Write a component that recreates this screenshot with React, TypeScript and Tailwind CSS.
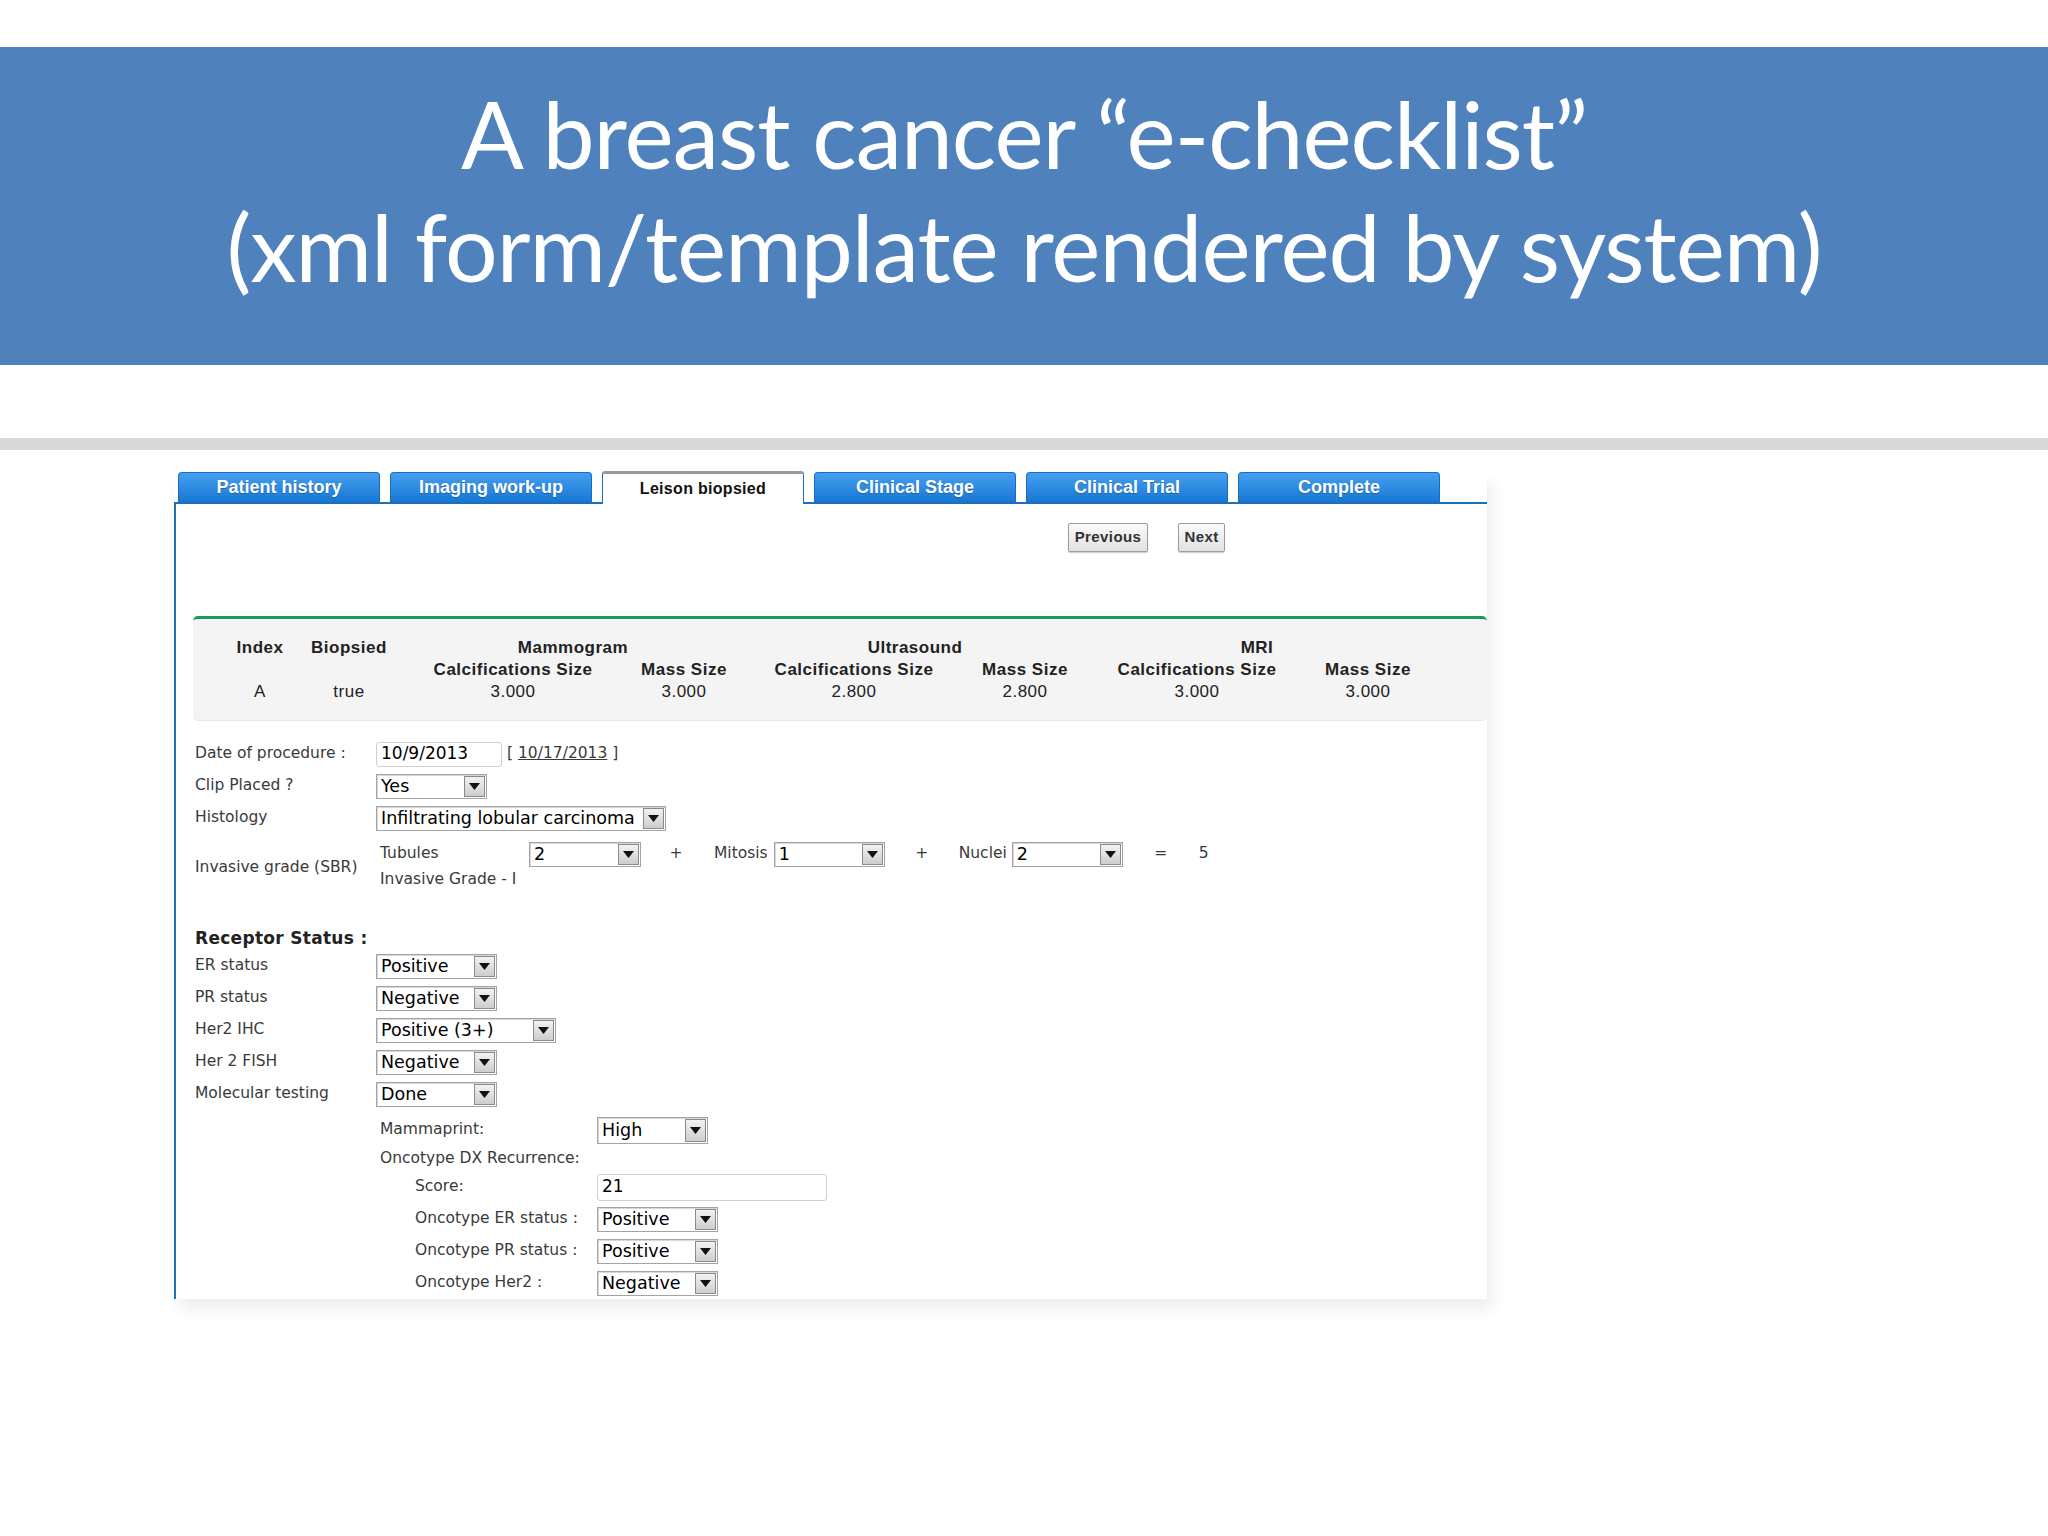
import React from "react";

const TABS = [
  "Patient history",
  "Imaging work-up",
  "Leison biopsied",
  "Clinical Stage",
  "Clinical Trial",
  "Complete",
];

const Arrow = () => (
  <div className="flex h-full w-[21px] shrink-0 items-center justify-center border border-[#8a8a8a] bg-gradient-to-b from-[#f2f2f2] to-[#cdcdcd]">
    <svg width="11" height="7" viewBox="0 0 11 7">
      <polygon points="0,0 11,0 5.5,7" fill="#111" />
    </svg>
  </div>
);

const Select = ({ value, className }: { value: string; className: string }) => (
  <div
    className={`flex h-[25px] items-stretch border border-[#a3a3a3] bg-white p-[1px] shadow-[inset_1px_1px_0_#d8d8d8] ${className}`}
  >
    <span className="flex flex-1 items-center overflow-hidden whitespace-nowrap pl-[3px] text-[17.5px] text-black">
      {value}
    </span>
    <Arrow />
  </div>
);

const TextBox = ({ value, className }: { value: string; className: string }) => (
  <div
    className={`flex items-center rounded-[3px] border border-[#cfcfcf] bg-white pl-[4px] text-[17px] text-black ${className}`}
  >
    {value}
  </div>
);

const Row = ({ label, children }: { label: string; children: React.ReactNode }) => (
  <div className="flex h-[32px] items-center">
    <span className="w-[181px] shrink-0">{label}</span>
    {children}
  </div>
);

// rows of the molecular testing block, indented under the control column
const SubRow = ({ label, children }: { label: string; children: React.ReactNode }) => (
  <div className="flex h-[32px] items-center pl-[220px]">
    <span className="w-[182px] shrink-0 whitespace-nowrap">{label}</span>
    {children}
  </div>
);

export default function App() {
  return (
    <div className="min-h-[1536px] w-[2048px] bg-white">
      {/* slide title */}
      <div className="mt-[47px] h-[318px] bg-[#4f81bd] pt-[30px] text-center font-['Lato',sans-serif] text-[93px] leading-[113px] tracking-[-1px] text-white">
        <div>A breast cancer “e-checklist”</div>
        <div>(xml form/template rendered by system)</div>
      </div>

      <div className="mt-[73px] h-[12px] bg-[#d9d9d9]" />

      {/* form screenshot */}
      <div className="ml-[174px] mt-[22px] w-[1313px] shadow-[6px_10px_14px_rgba(0,0,0,0.07)]">
        {/* tabs */}
        <div className="flex h-[30px] items-end gap-[10px] pl-[4px] font-['Liberation_Sans',Arial,sans-serif] text-[18px] font-bold">
          {TABS.map((t) =>
            t === "Leison biopsied" ? (
              <div
                key={t}
                className="relative z-10 -mb-[2px] flex h-[33px] w-[202px] items-center justify-center rounded-t-[3px] border-x border-t-[3px] border-x-[#1f6fb5] border-t-[#9a9a9a] bg-white text-[16px] tracking-[0.3px] text-[#111]"
              >
                {t}
              </div>
            ) : (
              <div
                key={t}
                className="flex h-[30px] w-[202px] items-center justify-center rounded-t-[4px] border border-b-0 border-[#1b6cc0] bg-gradient-to-b from-[#43a0ef] to-[#1677d4] text-white [text-shadow:0_1px_1px_rgba(0,0,0,0.25)]"
              >
                {t}
              </div>
            )
          )}
        </div>

        <div className="h-[797px] border-l-2 border-t-2 border-[#1f6fb5] bg-white pl-[17px] font-['DejaVu_Sans',Verdana,sans-serif] text-[15.5px] text-[#3a3a3a]">
          {/* pager */}
          <div className="flex pt-[19px] font-['Liberation_Sans',Arial,sans-serif] text-[15px] font-bold tracking-[0.4px] text-[#333]">
            <button className="ml-[875px] h-[29px] w-[80px] rounded-[2px] border border-[#9c9c9c] bg-gradient-to-b from-[#fbfbfb] to-[#e1e1e1] shadow-[0_1px_1px_rgba(0,0,0,0.2)]">
              Previous
            </button>
            <button className="ml-[30px] h-[29px] w-[47px] rounded-[2px] border border-[#9c9c9c] bg-gradient-to-b from-[#fbfbfb] to-[#e1e1e1] shadow-[0_1px_1px_rgba(0,0,0,0.2)]">
              Next
            </button>
          </div>

          {/* summary of the lesion */}
          <div className="mt-[64px] h-[104px] rounded-[5px] border-t-[3px] border-[#179a5b] bg-[#f4f4f4] pl-[31px] pt-[18px] font-['Liberation_Sans',Arial,sans-serif] text-[17px] leading-[22px] tracking-[0.5px] text-[#222] shadow-[0_1px_0_#e6e6e6]">
            <div className="grid grid-cols-[72px_106px_222px_120px_220px_122px_222px_120px] text-center">
              <div className="font-bold">Index</div>
              <div className="font-bold">Biopsied</div>
              <div className="col-span-2 font-bold">Mammogram</div>
              <div className="col-span-2 font-bold">Ultrasound</div>
              <div className="col-span-2 font-bold">MRI</div>

              <div />
              <div />
              <div className="font-bold">Calcifications Size</div>
              <div className="font-bold">Mass Size</div>
              <div className="font-bold">Calcifications Size</div>
              <div className="font-bold">Mass Size</div>
              <div className="font-bold">Calcifications Size</div>
              <div className="font-bold">Mass Size</div>

              <div>A</div>
              <div>true</div>
              <div>3.000</div>
              <div>3.000</div>
              <div>2.800</div>
              <div>2.800</div>
              <div>3.000</div>
              <div>3.000</div>
            </div>
          </div>

          {/* form fields */}
          <div className="mt-[18px] pl-[2px]">
            <Row label="Date of procedure :">
              <TextBox value="10/9/2013" className="h-[25px] w-[126px]" />
              <span className="ml-[5px]">
                [ <span className="underline">10/17/2013</span> ]
              </span>
            </Row>
            <Row label="Clip Placed ?">
              <Select value="Yes" className="w-[111px]" />
            </Row>
            <Row label="Histology">
              <Select value="Infiltrating lobular carcinoma" className="w-[290px]" />
            </Row>

            <div className="mt-[4px] flex items-center">
              <span className="w-[181px] shrink-0 pt-[8px]">Invasive grade (SBR)</span>
              <div className="flex flex-col pl-[4px]">
                <div className="flex h-[32px] items-center">
                  <span className="w-[149px]">Tubules</span>
                  <Select value="2" className="w-[112px]" />
                  <span className="w-[70px] text-center">+</span>
                  <span className="ml-[3px]">Mitosis</span>
                  <Select value="1" className="ml-[6px] w-[111px]" />
                  <span className="w-[74px] text-center">+</span>
                  <span>Nuclei</span>
                  <Select value="2" className="ml-[5px] w-[111px]" />
                  <span className="w-[76px] text-center">=</span>
                  <span>5</span>
                </div>
                <div className="flex h-[20px] items-center">Invasive Grade - I</div>
              </div>
            </div>

            <div className="mt-[38px] flex h-[22px] items-center text-[17px] font-bold tracking-[0.3px] text-[#222]">
              Receptor Status :
            </div>
            <Row label="ER status">
              <Select value="Positive" className="w-[121px]" />
            </Row>
            <Row label="PR status">
              <Select value="Negative" className="w-[121px]" />
            </Row>
            <Row label="Her2 IHC">
              <Select value="Positive (3+)" className="w-[180px]" />
            </Row>
            <Row label="Her 2 FISH">
              <Select value="Negative" className="w-[121px]" />
            </Row>
            <Row label="Molecular testing">
              <Select value="Done" className="w-[121px]" />
            </Row>

            <div className="mt-[4px] flex h-[32px] items-center pl-[185px]">
              <span className="w-[217px] shrink-0">Mammaprint:</span>
              <Select value="High" className="h-[27px] w-[111px]" />
            </div>
            <div className="flex h-[25px] items-center pl-[185px]">Oncotype DX Recurrence:</div>
            <SubRow label="Score:">
              <TextBox value="21" className="h-[27px] w-[230px]" />
            </SubRow>
            <SubRow label="Oncotype ER status :">
              <Select value="Positive" className="w-[121px]" />
            </SubRow>
            <SubRow label="Oncotype PR status :">
              <Select value="Positive" className="w-[121px]" />
            </SubRow>
            <SubRow label="Oncotype Her2 :">
              <Select value="Negative" className="w-[121px]" />
            </SubRow>
          </div>
        </div>
      </div>
    </div>
  );
}
